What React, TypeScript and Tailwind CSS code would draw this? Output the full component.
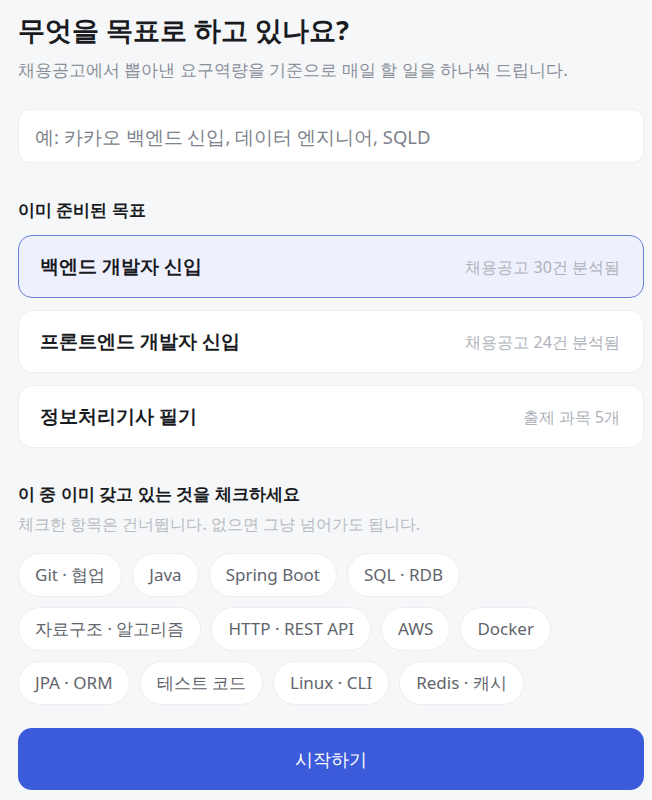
import React, { useState } from 'react';

const goals = [
    { title: '백엔드 개발자 신입', meta: '채용공고 30건 분석됨' },
    { title: '프론트엔드 개발자 신입', meta: '채용공고 24건 분석됨' },
    { title: '정보처리기사 필기', meta: '출제 과목 5개' },
];

const skills = [
    'Git · 협업',
    'Java',
    'Spring Boot',
    'SQL · RDB',
    '자료구조 · 알고리즘',
    'HTTP · REST API',
    'AWS',
    'Docker',
    'JPA · ORM',
    '테스트 코드',
    'Linux · CLI',
    'Redis · 캐시',
];

export default function App() {
    const [goal, setGoal] = useState('');
    const [selected, setSelected] = useState(0);
    const [checked, setChecked] = useState<string[]>([]);

    const toggle = (s: string) =>
        setChecked((prev) => (prev.includes(s) ? prev.filter((x) => x !== s) : [...prev, s]));

    return (
        <div className="min-h-[800px] bg-[#f6f7f9] pl-[18px] pr-[8px] pt-[12px] pb-[10px] font-['Noto_Sans',sans-serif] text-[#191b1f]">
            <h1 className="text-[27px] font-bold leading-[36px]">무엇을 목표로 하고 있나요?</h1>
            <p className="mt-[10px] text-[17px] leading-[24px] text-[#8a8f98]">
                채용공고에서 뽑아낸 요구역량을 기준으로 매일 할 일을 하나씩 드립니다.
            </p>

            <input
                type="text"
                value={goal}
                onChange={(e) => setGoal(e.target.value)}
                placeholder="예: 카카오 백엔드 신입, 데이터 엔지니어, SQLD"
                className="mt-[27px] block h-[54px] w-full rounded-[12px] border border-[#eceef1] bg-white px-[16px] text-[18.5px] text-[#191b1f] placeholder:text-[#7d828b] focus:outline-none"
            />

            <h2 className="mt-[35px] text-[17px] font-semibold leading-[24px]">이미 준비된 목표</h2>
            <div className="mt-[13px] flex flex-col gap-[12px]">
                {goals.map((g, i) => (
                    <button
                        key={g.title}
                        onClick={() => setSelected(i)}
                        className={
                            i === selected
                                ? 'flex h-[63px] items-center justify-between rounded-[14px] border border-[#6a80d6] bg-[#eef1fd] pl-[21px] pr-[23px] text-left'
                                : 'flex h-[63px] items-center justify-between rounded-[14px] border border-[#eceef1] bg-white pl-[21px] pr-[23px] text-left'
                        }
                    >
                        <span className="text-[19px] font-semibold">{g.title}</span>
                        <span className="text-[16px] text-[#aeb2b9]">{g.meta}</span>
                    </button>
                ))}
            </div>

            <h2 className="mt-[34px] text-[17px] font-semibold leading-[24px]">이 중 이미 갖고 있는 것을 체크하세요</h2>
            <p className="mt-[7px] text-[16.3px] leading-[22px] text-[#b8bcc2]">체크한 항목은 건너뜁니다. 없으면 그냥 넘어가도 됩니다.</p>

            <div className="mt-[18px] flex flex-wrap gap-x-[10px] gap-y-[10px]">
                {skills.map((s) => (
                    <button
                        key={s}
                        onClick={() => toggle(s)}
                        className={
                            checked.includes(s)
                                ? 'h-[44px] rounded-full border border-[#6a80d6] bg-[#eef1fd] px-[16px] text-[17px] text-[#3b5bdb]'
                                : 'h-[44px] rounded-full border border-[#eceef1] bg-white px-[16px] text-[17px] text-[#5f646c]'
                        }
                    >
                        {s}
                    </button>
                ))}
            </div>

            <button className="mt-[23px] flex h-[62px] w-full items-center justify-center rounded-[14px] bg-[#3b5bdb] text-[18px] font-medium text-white">
                시작하기
            </button>
        </div>
    );
}
